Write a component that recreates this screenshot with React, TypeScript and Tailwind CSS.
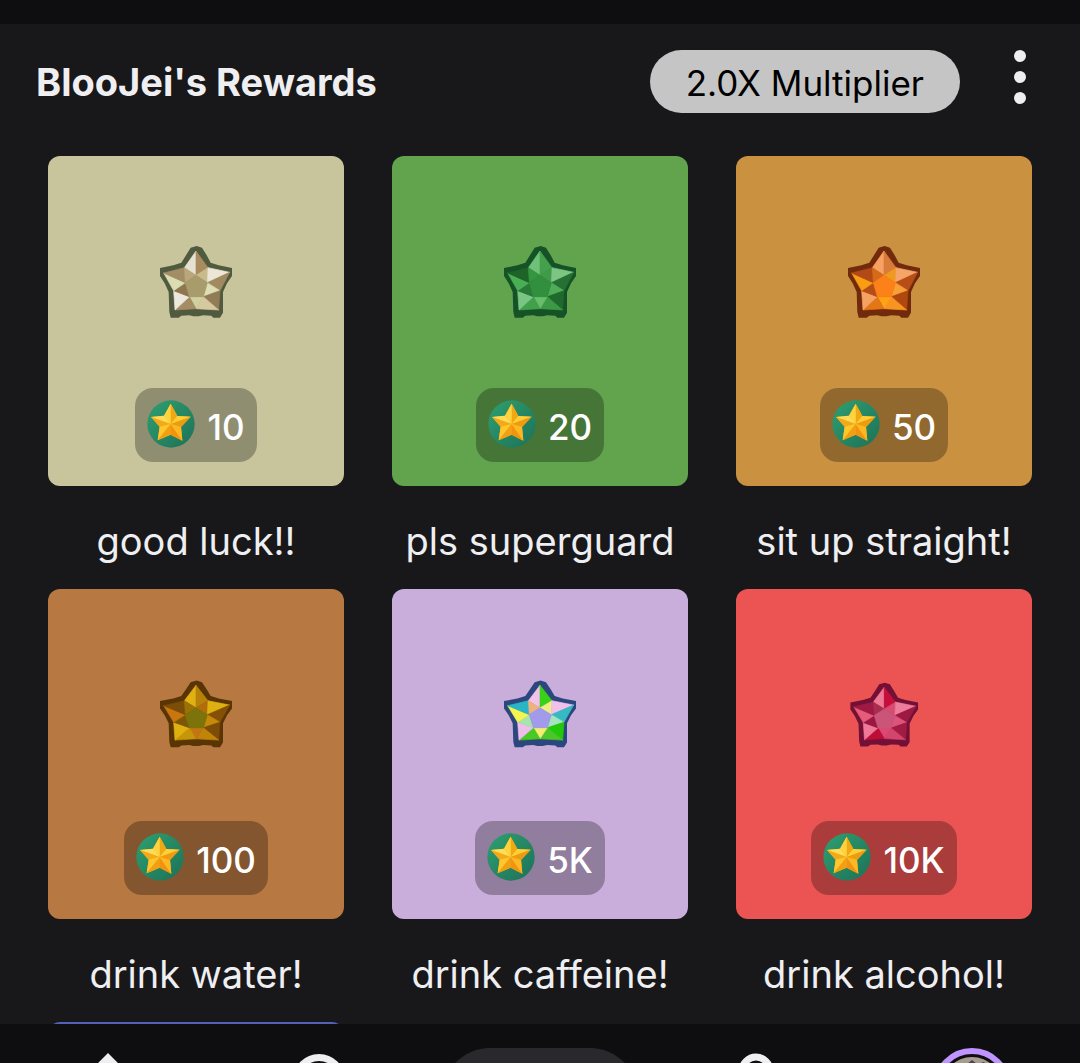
import React from "react";

type Gem = { colors: string[]; outline: string; transform?: string };

const OUTLINE =
  "M140 32 L156 37 L170 60 L182 82 L206 90 L246 98 L246 122 L231 144 L219 170 L219 232 L210 247 L190 247 L184 241 L160 240 L146 243 L130 243 L118 240 L94 241 L86 247 L62 247 L58 230 L56 170 L44 144 L30 122 L30 98 L70 90 L94 82 L108 60 L122 37 Z";

const FACETS = [
  "103,97 138,47 138,120",
  "138,47 174,97 138,120",
  "174,97 138,120 172,142",
  "174,97 239,111 172,142",
  "239,111 210,166 172,142",
  "210,166 172,142 160,184",
  "210,166 206,224 160,184",
  "206,224 138,220 160,184",
  "138,220 160,184 118,184",
  "138,220 75,224 118,184",
  "75,224 71,166 118,184",
  "71,166 118,184 106,142",
  "71,166 41,113 106,142",
  "41,113 103,97 106,142",
  "103,97 106,142 138,120",
  "138,120 172,142 160,184 118,184 106,142",
];

const SHORT = "translate(0 7) scale(1 0.93)";

const gems: Record<string, Gem> = {
  pearl: {
    outline: "#4f5a3e",
    colors: ["#e6e2d2", "#a98b60", "#c9ba8b", "#ebe6d6", "#a28a60", "#dcdeb4", "#927c56", "#d6c9a0", "#cfd29f", "#a48c65", "#ece8dc", "#8e774e", "#dadcb2", "#a38d64", "#b9a67a", "#a89b6c"],
  },
  emerald: {
    outline: "#155226",
    colors: ["#6fc079", "#45a04d", "#3f9b47", "#7cc585", "#267034", "#51ac59", "#1f692d", "#3c9946", "#67bd69", "#42a04d", "#79c584", "#2a7937", "#4aae54", "#1e6429", "#359540", "#318f3e"],
  },
  amber: {
    outline: "#712a0c",
    colors: ["#f7a263", "#d97b3a", "#ef9a1c", "#f5a568", "#b84d18", "#f6a037", "#b0470f", "#f79522", "#ffa315", "#e47617", "#f5a263", "#b64c16", "#f99d13", "#b24916", "#d56b18", "#fc8119"],
  },
  topaz: {
    outline: "#593404",
    colors: ["#dfb112", "#b78209", "#b06e0a", "#dfb011", "#855006", "#c68a0a", "#7d4d07", "#c08508", "#c27511", "#c7950a", "#e0b011", "#7d5708", "#c8760d", "#7b4d06", "#9b7107", "#7d730b"],
    transform: SHORT,
  },
  prism: {
    outline: "#2c477d",
    colors: ["#f2c1ec", "#3ad219", "#f0ee83", "#f1c1ec", "#35b9c2", "#a4e5be", "#22c90b", "#4cc72a", "#f3ed70", "#47ca22", "#efbdeb", "#a7e5aa", "#f4f54f", "#2ab5c7", "#edb37e", "#a29bec"],
    transform: SHORT,
  },
  ruby: {
    outline: "#731035",
    colors: ["#ee7994", "#c50e3b", "#d84c74", "#ed7d9a", "#9c1941", "#dd537b", "#a21b42", "#d4456e", "#da4873", "#bd0e3a", "#f0799a", "#9a1743", "#e75b7b", "#a01942", "#a92d50", "#cb5579"],
    transform: "translate(9 15) scale(0.94 0.89)",
  },
};

function StarGem({ gem }: { gem: Gem }) {
  return (
    <svg viewBox="30 32 216 216" className="h-18 w-18" aria-hidden="true">
      <g transform={gem.transform}>
        <path d={OUTLINE} fill={gem.outline} />
        {FACETS.map((points, i) => (
          <polygon key={points} points={points} fill={gem.colors[i]} stroke={gem.colors[i]} strokeWidth="2" strokeLinejoin="round" />
        ))}
      </g>
    </svg>
  );
}

function Coin() {
  return (
    <svg viewBox="0 0 144 144" className="h-12 w-12 shrink-0" aria-hidden="true">
      <defs>
        <linearGradient id="coin" x1="0" y1="0" x2="1" y2="1">
          <stop offset="0" stopColor="#2f9f70" />
          <stop offset="1" stopColor="#1c7158" />
        </linearGradient>
      </defs>
      <circle cx="72" cy="72" r="71" fill="url(#coin)" />
      <path d="M71 11 L91 48 L131 50 L102 81 L106 122 L71 104 L32 121 L38 80 L12 51 L51 47 Z" fill="#f3b51d" />
      <path d="M71 11 L91 48 L71 72 Z" fill="#f1a813" />
      <path d="M71 11 L51 47 L71 72 Z" fill="#ffd33e" />
      <path d="M12 51 L51 47 L71 72 Z" fill="#ffdc58" />
      <path d="M12 51 L38 80 L71 72 Z" fill="#f2aa1a" />
      <path d="M131 50 L91 48 L71 72 Z" fill="#ffcf39" />
      <path d="M131 50 L102 81 L71 72 Z" fill="#ef9b10" />
      <path d="M32 121 L38 80 L71 72 Z" fill="#ffc72c" />
      <path d="M32 121 L71 104 L71 72 Z" fill="#f39f14" />
      <path d="M106 122 L71 104 L71 72 Z" fill="#f2930f" />
      <path d="M106 122 L102 81 L71 72 Z" fill="#fbb822" />
    </svg>
  );
}

const rewards = [
  { name: "good luck!!", cost: "10", gem: gems.pearl, tile: "bg-[#c8c59d]" },
  { name: "pls superguard", cost: "20", gem: gems.emerald, tile: "bg-[#62a34e]" },
  { name: "sit up straight!", cost: "50", gem: gems.amber, tile: "bg-[#ca9141]" },
  { name: "drink water!", cost: "100", gem: gems.topaz, tile: "bg-[#b87842]" },
  { name: "drink caffeine!", cost: "5K", gem: gems.prism, tile: "bg-[#c9addb]" },
  { name: "drink alcohol!", cost: "10K", gem: gems.ruby, tile: "bg-[#ec5453]" },
];

function RewardCard({ name, cost, gem, tile }: (typeof rewards)[number]) {
  return (
    <button type="button" className="flex min-w-0 flex-col text-[#efeff1]">
      <span className={`flex h-[330px] w-full flex-col items-center justify-between rounded-xl pt-[90px] pb-6 ${tile}`}>
        <StarGem gem={gem} />
        <span className="flex items-center gap-3 rounded-[18px] bg-black/28 px-3 pt-3 pb-3.5">
          <Coin />
          <span className="pt-1.5 text-[35px] leading-10 font-medium text-white">{cost}</span>
        </span>
      </span>
      <span className="w-full pt-[31px] pb-6 text-center text-[38px] leading-[48px] whitespace-nowrap">{name}</span>
    </button>
  );
}

export default function App() {
  return (
    <div className="flex h-screen flex-col overflow-hidden bg-[#18181b] font-[Inter,sans-serif] text-[#efeff1]">
      <div className="h-6 shrink-0 bg-[#0e0e10]" />
      <header className="flex h-[132px] shrink-0 items-start pt-[26px] pr-9 pl-9">
        <h1 className="flex-1 text-[38px] leading-[64px] font-bold whitespace-nowrap">BlooJei's Rewards</h1>
        <div className="flex h-[63px] items-center rounded-full bg-[#c5c5c5] px-9 pt-1 text-[35px] text-black">2.0X Multiplier</div>
        <button type="button" aria-label="More options" className="ml-9 flex w-12 flex-col items-center gap-[9px]">
          <span className="h-3 w-3 rounded-full bg-[#efeff1]" />
          <span className="h-3 w-3 rounded-full bg-[#efeff1]" />
          <span className="h-3 w-3 rounded-full bg-[#efeff1]" />
        </button>
      </header>
      <main className="min-h-0 flex-1 overflow-hidden">
        <div className="grid grid-cols-3 gap-x-12 px-12">
          {rewards.map((reward) => (
            <RewardCard key={reward.name} {...reward} />
          ))}
          <div className="h-[330px] rounded-xl bg-[#5560b8]" />
        </div>
      </main>
      <nav className="grid h-[39px] shrink-0 grid-cols-5 justify-items-center overflow-hidden bg-[#0e0e10] pt-6">
        <a href="#home" aria-label="Home">
          <svg viewBox="0 0 72 72" className="h-18 w-18" fill="none" stroke="#efeff1" strokeWidth="7">
            <path d="M8 38 L36 10 L64 38 M14 34 V66 H58 V34" />
          </svg>
        </a>
        <a href="#search" aria-label="Search">
          <svg viewBox="0 0 72 72" className="h-18 w-18" fill="none" stroke="#efeff1" strokeWidth="7">
            <circle cx="31" cy="32" r="22.5" />
            <path d="M48 49 L66 67" />
          </svg>
        </a>
        <button type="button" aria-label="Create" className="h-24 w-[196px] rounded-[48px] bg-[#29292d]" />
        <a href="#activity" aria-label="Activity">
          <svg viewBox="0 0 72 72" className="h-18 w-18" fill="none" stroke="#efeff1" strokeWidth="7">
            <circle cx="36" cy="23" r="14" />
            <path d="M10 70 C10 40 62 40 62 70" />
          </svg>
        </a>
        <a href="#profile" aria-label="Profile">
          <svg viewBox="0 0 78 78" className="h-[78px] w-[78px]">
            <circle cx="39" cy="39" r="36" fill="none" stroke="#bf94ff" strokeWidth="6" />
            <circle cx="39" cy="39" r="30" fill="#a89c91" />
            <path d="M22 20 L28 15 L34 16 L39 12 L44 16 L51 14 L57 20 L60 40 H18 Z" fill="#4d4352" />
          </svg>
        </a>
      </nav>
    </div>
  );
}
